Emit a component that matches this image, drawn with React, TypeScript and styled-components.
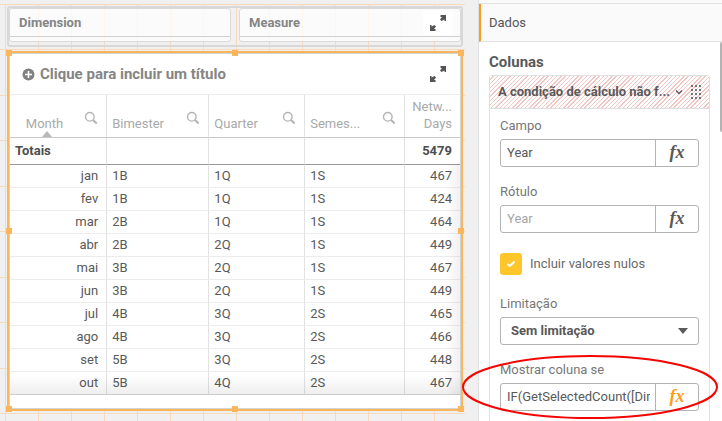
import React from "react";
import styled, { createGlobalStyle, css } from "styled-components";

const GlobalStyle = createGlobalStyle`
  *, *::before, *::after { box-sizing: border-box; }
  body {
    margin: 0;
    background: #f0f0f0;
    color: #595959;
    font-family: Roboto, "Open Sans", sans-serif;
    font-size: 13px;
    line-height: 16px;
    overflow: hidden;
  }
  button, input, select { font: inherit; color: inherit; }
  button { padding: 0; border: 0; background: none; cursor: pointer; }
`;

const Page = styled.div`
  position: relative;
  display: grid;
  grid-template-columns: minmax(0, 1fr) 244px;
  height: 100vh;
  overflow: hidden;
`;

const Canvas = styled.main`
  position: relative;
  display: flex;
  flex-direction: column;
  gap: 4px;
  padding: 6px 15px 10px 7px;
  &::before {
    content: "";
    position: absolute;
    inset: 4px 13px 0 0;
    background-image:
      linear-gradient(90deg, #f7d9be 1px, transparent 1px),
      linear-gradient(#f7d9be 1px, transparent 1px),
      linear-gradient(#f7d9be 1px, transparent 1px);
    background-size: 33px 100%, 100% 91px, 100% 91px;
    background-position: 5px 0, 0 45px, 0 91px;
  }
`;

const FilterPane = styled.section`
  position: relative;
  display: grid;
  grid-template-columns: 1fr 1fr;
  gap: 8px;
  height: 41px;
  flex: none;
  padding: 0 0 3px;
  border: 2px solid #d8d8d8;
  border-radius: 3px;
`;

const FilterBox = styled.div`
  position: relative;
  border: 1px solid #dadada;
  border-radius: 3px;
  background: rgba(255, 255, 255, 0.75);
`;

const FilterTitle = styled.h2`
  margin: 0;
  height: 28px;
  padding: 6px 9px 0;
  border-bottom: 1px solid #d0d0d0;
  color: #858585;
  font-size: 13px;
  font-weight: 700;
`;

const ExpandButton = styled.button<{ $floating?: boolean }>`
  display: flex;
  align-items: center;
  justify-content: center;
  width: 30px;
  height: 24px;
  border-radius: 3px;
  color: #555;
  background: #fff;
  ${(p) => p.$floating && css`
    position: absolute;
    top: 2px;
    right: 7px;
  `}
`;

const ObjectFrame = styled.section`
  position: relative;
  flex: 1;
  min-height: 0;
  border: 2px solid #fbb55c;
  background: #fff;
  box-shadow: inset 0 0 0 1px #d4d4d4;
  padding: 1px;
`;

const Handle = styled.span<{ $x: 0 | 50 | 100; $y: 0 | 50 | 100 }>`
  position: absolute;
  width: 6px;
  height: 6px;
  background: #fbb55c;
  left: ${(p) => (p.$x === 0 ? "-3px" : p.$x === 50 ? "calc(50% - 3px)" : "calc(100% - 3px)")};
  top: ${(p) => (p.$y === 0 ? "-3px" : p.$y === 50 ? "calc(50% - 3px)" : "calc(100% - 3px)")};
`;

const ObjectHeader = styled.header`
  display: flex;
  align-items: center;
  justify-content: space-between;
  height: 41px;
  padding: 0 7px 0 12px;
  border-bottom: 1px solid #ededed;
`;

const ObjectTitle = styled.h1`
  display: flex;
  align-items: center;
  gap: 5px;
  margin: 0;
  color: #858585;
  font-size: 15px;
  font-weight: 700;
`;

const TableArea = styled.div`
  position: relative;
  &::after {
    content: "";
    position: absolute;
    inset: 0;
    pointer-events: none;
    background:
      linear-gradient(0deg, rgba(0, 0, 0, 0.07), transparent 20px),
      linear-gradient(270deg, rgba(0, 0, 0, 0.06), transparent 14px) 0 69px no-repeat;
  }
`;

const Table = styled.table`
  width: 100%;
  table-layout: fixed;
  border-collapse: separate;
  border-spacing: 0;
`;

const Col = styled.col<{ $share: string }>`
  width: ${(p) => p.$share};
`;

const HeadCell = styled.th`
  position: relative;
  height: 43px;
  padding: 0 8px 5px 5px;
  vertical-align: bottom;
  border-right: 1px solid #e2e2e2;
  border-bottom: 1px solid #c8c8c8;
  color: #a9a9a9;
  font-weight: 400;
  line-height: 17px;
  text-align: left;
  &:last-child { border-right: 0; text-align: right; }
`;

const HeadContent = styled.div<{ $end?: boolean }>`
  display: flex;
  justify-content: ${(p) => (p.$end ? "flex-end" : "space-between")};
  gap: ${(p) => (p.$end ? "21px" : "4px")};
`;

const SearchButton = styled.button`
  width: 14px;
  height: 14px;
  margin-top: -4px;
  color: #b4b4b4;
  svg { display: block; }
`;

const SortMark = styled.svg`
  position: absolute;
  left: 32px;
  bottom: 0;
`;

const Cell = styled.td<{ $end?: boolean }>`
  height: 23px;
  padding: 0 8px 0 5px;
  border-right: 1px solid #e2e2e2;
  border-bottom: 1px solid #ececec;
  text-align: ${(p) => (p.$end ? "right" : "left")};
  &:last-child { border-right: 0; }
  tr:last-child > & { border-bottom-color: #dcdcdc; }
`;

const TotalCell = styled(Cell)`
  height: 27px;
  border-bottom-color: #999;
  font-weight: 700;
  color: #4d4d4d;
`;

const Panel = styled.aside`
  position: relative;
  height: 100vh;
  overflow: hidden;
  border-left: 1px solid #e0e0e0;
  background: #fff;
`;

const TabEdge = styled.div`
  height: 4px;
  background: #fafafa;
  border-bottom: 1px solid #e2e2e2;
`;

const SectionTab = styled.button`
  display: block;
  width: 100%;
  height: 38px;
  padding-left: 8px;
  border-left: 2px solid #ff9b1a;
  border-bottom: 1px solid #e2e2e2;
  background: #fafafa;
  text-align: left;
  color: #555;
`;

const PanelBody = styled.div`
  padding: 12px 12px 0 10px;
`;

const PanelTitle = styled.h2`
  margin: 0 0 5px;
  font-size: 15px;
  font-weight: 700;
`;

const ColumnCard = styled.div`
  border: 1px solid #e0e0e0;
  border-radius: 3px;
  height: 400px;
`;

const CardHeader = styled.button`
  display: flex;
  align-items: center;
  gap: 4px;
  width: 100%;
  height: 33px;
  padding: 0 8px;
  border-bottom: 1px solid #dedede;
  background: repeating-linear-gradient(135deg, #fff 0 2px, #f3c6c6 2px 3px);
`;

const CardTitle = styled.span`
  flex: 1;
  min-width: 0;
  text-align: left;
  font-size: 13px;
  font-weight: 700;
  white-space: nowrap;
`;

const DragDots = styled.svg`
  flex: none;
  margin-left: 4px;
`;

const Fields = styled.div`
  padding: 9px 10px;
`;

const Field = styled.div`
  margin-bottom: 17px;
`;

const Label = styled.label`
  display: block;
  margin-bottom: 5px;
  color: #777;
`;

const InputGroup = styled.div`
  display: flex;
  height: 28px;
  border: 1px solid #b3b3b3;
  border-radius: 3px;
  background: #fff;
`;

const TextInput = styled.input`
  flex: 1;
  min-width: 0;
  margin: 0 5px 0 6px;
  padding: 0;
  border: 0;
  outline: 0;
  background: none;
  &::placeholder { color: #a6a6a6; opacity: 1; }
`;

const FxButton = styled.button<{ $active?: boolean }>`
  width: 43px;
  padding-bottom: 3px;
  border-left: 1px solid #b3b3b3;
  color: ${(p) => (p.$active ? "#ff9b1a" : "#595959")};
  font-family: "Liberation Serif", serif;
  font-size: 18px;
  font-style: italic;
  font-weight: 700;
`;

const CheckRow = styled.label`
  display: flex;
  align-items: center;
  gap: 8px;
  margin: 20px 0 21px;
  color: #6a6a6a;
`;

const CheckBox = styled.input`
  appearance: none;
  width: 22px;
  height: 22px;
  margin: 0;
  border-radius: 3px;
  background: #ffc629;
`;

const CheckHolder = styled.span`
  position: relative;
  display: grid;
  svg { position: absolute; inset: 7px; pointer-events: none; }
`;

const SelectHolder = styled.div`
  position: relative;
  svg { position: absolute; right: 11px; top: 11px; pointer-events: none; }
`;

const Select = styled.select`
  appearance: none;
  display: block;
  width: 100%;
  height: 28px;
  padding: 0 28px 0 10px;
  border: 1px solid #b3b3b3;
  border-radius: 3px;
  background: #fff;
  font-weight: 700;
`;

const ScrollThumb = styled.div`
  position: absolute;
  top: 42px;
  right: 0;
  width: 2px;
  height: 90px;
  border-radius: 3px 0 0 3px;
  background: #b3b3b3;
`;

const Highlight = styled.svg`
  position: absolute;
  right: 4px;
  top: 354px;
  pointer-events: none;
`;

const ExpandIcon = () => (
  <svg width="18" height="18" viewBox="0 0 18 18" fill="currentColor" aria-hidden="true">
    <path d="M11.500 1H17v6h-1.500V5.500L12.500 7 11 5.500l2-2.500h-1.500z" />
    <path d="M6.500 17H1v-6h1.500v1.500L5.500 11 7 12.500 5 15h1.500z" />
  </svg>
);

const SearchIcon = () => (
  <svg width="14" height="14" viewBox="0 0 14 14" fill="none" stroke="currentColor" aria-hidden="true">
    <circle cx="5.800" cy="5.800" r="4.300" strokeWidth="1.400" />
    <path d="M9 9l3.700 3.500" strokeWidth="2" />
  </svg>
);

const rows = [
  ["jan", "1B", "1Q", "1S", "467"],
  ["fev", "1B", "1Q", "1S", "424"],
  ["mar", "2B", "1Q", "1S", "464"],
  ["abr", "2B", "2Q", "1S", "449"],
  ["mai", "3B", "2Q", "1S", "467"],
  ["jun", "3B", "2Q", "1S", "449"],
  ["jul", "4B", "3Q", "2S", "465"],
  ["ago", "4B", "3Q", "2S", "466"],
  ["set", "5B", "3Q", "2S", "448"],
  ["out", "5B", "4Q", "2S", "467"],
];

const handles: Array<[0 | 50 | 100, 0 | 50 | 100]> = [
  [0, 0], [50, 0], [100, 0], [0, 50], [100, 50], [0, 100], [50, 100], [100, 100],
];

const columns = ["Month", "Bimester", "Quarter", "Semes..."];

export default function App() {
  return (
    <>
      <GlobalStyle />
      <Page>
        <Canvas>
          <FilterPane>
            <FilterBox>
              <FilterTitle>Dimension</FilterTitle>
            </FilterBox>
            <FilterBox>
              <FilterTitle>Measure</FilterTitle>
              <ExpandButton $floating aria-label="Expandir filtro"><ExpandIcon /></ExpandButton>
            </FilterBox>
          </FilterPane>

          <ObjectFrame>
            <ObjectHeader>
              <ObjectTitle>
                <svg width="13" height="13" viewBox="0 0 13 13" aria-hidden="true">
                  <circle cx="6.500" cy="6.500" r="6" fill="#808080" />
                  <path d="M6.500 3v7M3 6.500h7" stroke="#fff" strokeWidth="1.600" />
                </svg>
                Clique para incluir um título
              </ObjectTitle>
              <ExpandButton aria-label="Expandir tabela"><ExpandIcon /></ExpandButton>
            </ObjectHeader>
            <TableArea>
              <Table>
                <colgroup>
                  <Col $share="21.600%" />
                  <Col $share="22.700%" />
                  <Col $share="21.300%" />
                  <Col $share="22.200%" />
                  <Col $share="12.200%" />
                </colgroup>
                <thead>
                  <tr>
                    {columns.map((name, i) => (
                      <HeadCell key={name} scope="col">
                        <HeadContent $end={i === 0}>
                          <span>{name}</span>
                          <SearchButton aria-label={`Pesquisar ${name}`}><SearchIcon /></SearchButton>
                        </HeadContent>
                        {i === 0 && (
                          <SortMark width="10" height="6" viewBox="0 0 10 6" aria-hidden="true">
                            <path d="M5 0l5 6H0z" fill="#b8b8b8" />
                          </SortMark>
                        )}
                      </HeadCell>
                    ))}
                    <HeadCell scope="col">Netw...<br />Days</HeadCell>
                  </tr>
                </thead>
                <tbody>
                  <tr>
                    <TotalCell>Totais</TotalCell>
                    <TotalCell />
                    <TotalCell />
                    <TotalCell />
                    <TotalCell $end>5479</TotalCell>
                  </tr>
                  {rows.map((row) => (
                    <tr key={row[0]}>
                      {row.map((value, i) => (
                        <Cell key={i} $end={i === 0 || i === 4}>{value}</Cell>
                      ))}
                    </tr>
                  ))}
                </tbody>
              </Table>
            </TableArea>
            {handles.map(([x, y]) => <Handle key={`${x}-${y}`} $x={x} $y={y} />)}
          </ObjectFrame>
        </Canvas>

        <Panel>
          <TabEdge />
          <SectionTab>Dados</SectionTab>
          <PanelBody>
            <PanelTitle>Colunas</PanelTitle>
            <ColumnCard>
              <CardHeader>
                <CardTitle>A condição de cálculo não f...</CardTitle>
                <svg width="8" height="6" viewBox="0 0 8 6" fill="none" stroke="#595959" strokeWidth="1.300" aria-hidden="true">
                  <path d="M1 1.500l3 3 3-3" />
                </svg>
                <DragDots width="10" height="14" viewBox="0 0 10 14" fill="#737373" aria-hidden="true">
                  {[0, 4, 8, 12].map((y) => [0, 4, 8].map((x) => (
                    <rect key={`${x}-${y}`} x={x} y={y} width="2" height="2" />
                  )))}
                </DragDots>
              </CardHeader>
              <Fields>
                <Field>
                  <Label htmlFor="field">Campo</Label>
                  <InputGroup>
                    <TextInput id="field" defaultValue="Year" />
                    <FxButton aria-label="Expressão do campo">fx</FxButton>
                  </InputGroup>
                </Field>
                <Field>
                  <Label htmlFor="caption">Rótulo</Label>
                  <InputGroup>
                    <TextInput id="caption" placeholder="Year" />
                    <FxButton aria-label="Expressão do rótulo">fx</FxButton>
                  </InputGroup>
                </Field>
                <CheckRow>
                  <CheckHolder>
                    <CheckBox type="checkbox" defaultChecked />
                    <svg width="8" height="8" viewBox="0 0 8 8" fill="none" stroke="#fff" strokeWidth="2" aria-hidden="true">
                      <path d="M0.500 4l2.200 2L7.500 1.500" />
                    </svg>
                  </CheckHolder>
                  Incluir valores nulos
                </CheckRow>
                <Field>
                  <Label htmlFor="limit">Limitação</Label>
                  <SelectHolder>
                    <Select id="limit"><option>Sem limitação</option></Select>
                    <svg width="10" height="6" viewBox="0 0 10 6" aria-hidden="true">
                      <path d="M0 0h10L5 6z" fill="#595959" />
                    </svg>
                  </SelectHolder>
                </Field>
                <Field>
                  <Label htmlFor="show">Mostrar coluna se</Label>
                  <InputGroup>
                    <TextInput id="show" defaultValue="IF(GetSelectedCount([Dimension])" />
                    <FxButton $active aria-label="Expressão da condição">fx</FxButton>
                  </InputGroup>
                </Field>
              </Fields>
            </ColumnCard>
          </PanelBody>
          <ScrollThumb />
        </Panel>

        <Highlight width="256" height="66" viewBox="0 0 256 66" fill="none" aria-hidden="true">
          <ellipse cx="128" cy="33" rx="127" ry="31" stroke="#f50500" strokeWidth="2" />
        </Highlight>
      </Page>
    </>
  );
}
